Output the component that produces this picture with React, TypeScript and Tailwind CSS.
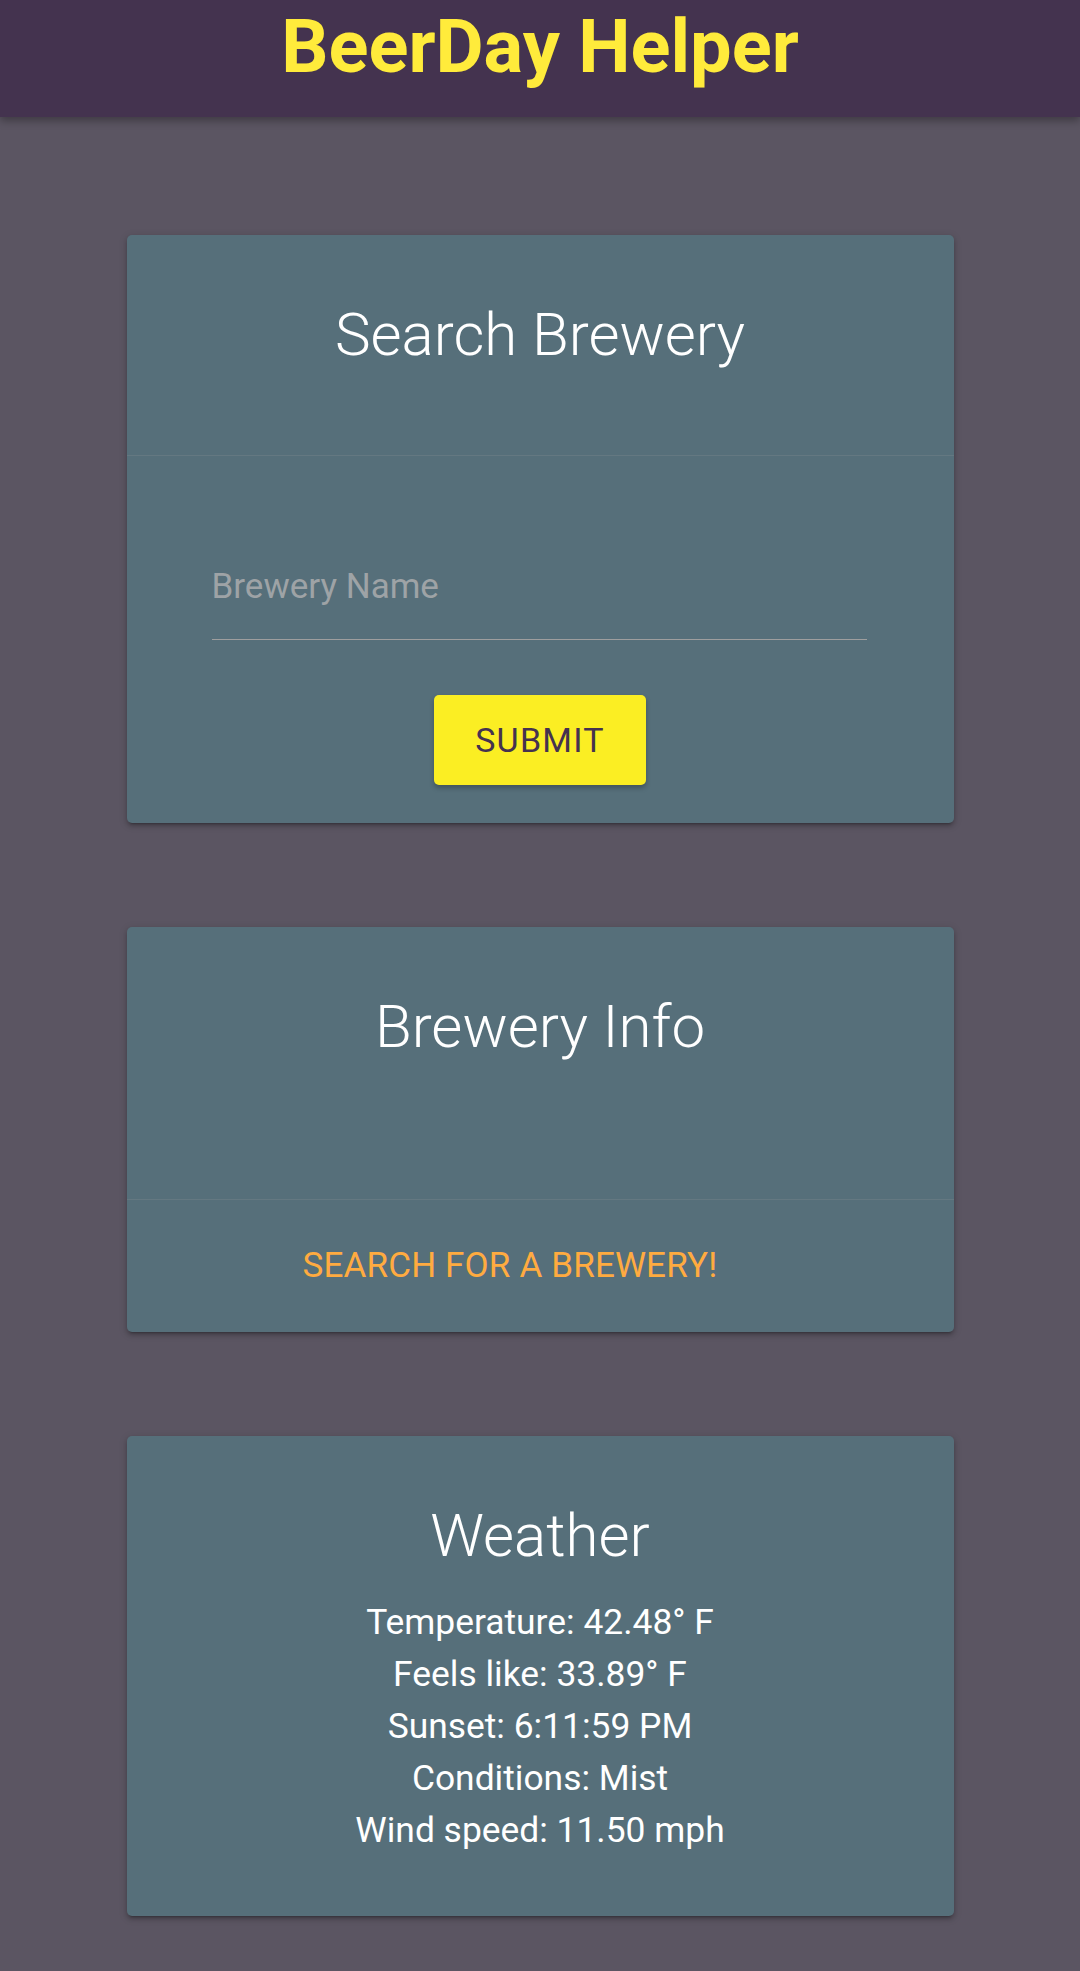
import React, { useState } from 'react';

function Card({ children }: { children: React.ReactNode }) {
  return (
    <div className="mx-auto w-[827px] rounded-[5px] bg-[#566f7a] shadow-[0_3px_4px_0_rgba(0,0,0,0.18),0_4px_2px_-3px_rgba(0,0,0,0.2),0_2px_8px_0_rgba(0,0,0,0.16)]">
      {children}
    </div>
  );
}

function CardTitle({ text }: { text: string }) {
  return (
    <h2 className="text-center text-[60px] font-light leading-none text-white">
      {text}
    </h2>
  );
}

function App() {
  const [brewery, setBrewery] = useState('');

  const weather = [
    'Temperature: 42.48° F',
    'Feels like: 33.89° F',
    'Sunset: 6:11:59 PM',
    'Conditions: Mist',
    'Wind speed: 11.50 mph',
  ];

  return (
    <div
      className="min-h-screen bg-[#5b5562]"
      style={{ fontFamily: 'Roboto, "Noto Sans", sans-serif' }}
    >
      <header className="relative z-10 h-[117px] bg-[#44334f] pt-[10px] shadow-[0_4px_8px_rgba(0,0,0,0.3)]">
        <h1 className="text-center text-[74px] font-bold leading-none text-[#ffeb3b]">
          BeerDay Helper
        </h1>
      </header>

      <main className="flex flex-col gap-[104px] pt-[118px] pb-[55px]">
        <Card>
          <div className="h-[220px] pt-[70px]">
            <CardTitle text="Search Brewery" />
          </div>
          <form
            onSubmit={e => e.preventDefault()}
            className="flex flex-col items-center border-t border-[rgba(160,160,160,0.2)] pt-[113px] pb-[38px]"
          >
            <input
              type="text"
              value={brewery}
              onChange={e => setBrewery(e.target.value)}
              placeholder="Brewery Name"
              className="block w-[655px] ml-[-2px] border-b border-[#9e9e9e] bg-transparent pt-0 pb-[34px] text-[35px] leading-[36px] text-white placeholder:text-[#9ea3a6] focus:outline-none"
            />
            <button
              type="submit"
              className="mt-[55px] h-[90px] w-[212px] rounded-[5px] bg-[#fbee23] text-[34px] uppercase tracking-[1.25px] text-[#45324f] shadow-[0_3px_5px_rgba(0,0,0,0.25)]"
            >
              Submit
            </button>
          </form>
        </Card>

        <Card>
          <div className="h-[272px] pt-[70px]">
            <CardTitle text="Brewery Info" />
          </div>
          <div className="border-t border-[rgba(160,160,160,0.2)] pt-[48px] pb-[49px] text-center text-[35px] leading-[35px]">
            <a className="mr-[60px] uppercase tracking-[0.15px] text-[#ffab40]">
              Search for a brewery!
            </a>
          </div>
        </Card>

        <Card>
          <div className="pt-[70px] pb-[60px]">
            <CardTitle text="Weather" />
            <div className="mt-[30px] flex flex-col items-center text-[35.4px] leading-[52px] text-white">
              {weather.map(line => (
                <p key={line}>{line}</p>
              ))}
            </div>
          </div>
        </Card>
      </main>
    </div>
  );
}

export default App;
